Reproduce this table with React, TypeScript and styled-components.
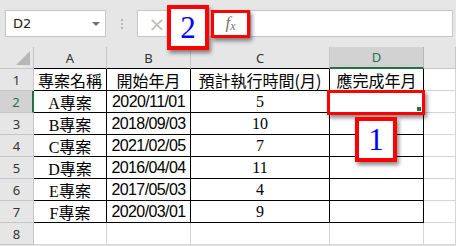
import styled, { createGlobalStyle } from 'styled-components';

const GlobalStyle = createGlobalStyle`
  html, body {
    margin: 0;
    padding: 0;
  }
  body {
    background: #e6e6e6;
    font-family: "Liberation Sans", Arial, sans-serif;
  }
`;

const columns = ['A', 'B', 'C', 'D'];

const headings = ['專案名稱', '開始年月', '預計執行時間(月)', '應完成年月'];

const projects = [
  { name: 'A專案', start: '2020/11/01', months: '5' },
  { name: 'B專案', start: '2018/09/03', months: '10' },
  { name: 'C專案', start: '2021/02/05', months: '7' },
  { name: 'D專案', start: '2016/04/04', months: '11' },
  { name: 'E專案', start: '2017/05/03', months: '4' },
  { name: 'F專案', start: '2020/03/01', months: '9' },
];

const GREEN = '#217346';
const GRID = '#d4d4d4';
const HEAD_LINE = '#c6c6c6';

function App() {
  return (
    <Sheet>
      <GlobalStyle />
      <FormulaBar>
        <NameBox>
          D2
          <Caret />
        </NameBox>
        <Grip>
          <i />
          <i />
          <i />
        </Grip>
        <ButtonStrip>
          <Cancel>×</Cancel>
          <Fx>
            f<sub>x</sub>
          </Fx>
        </ButtonStrip>
        <FormulaInput />
      </FormulaBar>

      <Grid>
        <Corner>
          <svg width="16" height="15" viewBox="0 0 16 15">
            <polygon points="15,0 15,14 1,14" fill="#b7b7b7" />
          </svg>
        </Corner>
        {columns.map((c) => (
          <ColHead key={c} $active={c === 'D'} $table>
            {c}
          </ColHead>
        ))}
        {/* column E label sits past the right edge */}
        <ColHead />

        <RowHead>1</RowHead>
        {headings.map((h) => (
          <Cell key={h} $boxed>
            {h}
          </Cell>
        ))}
        <Cell />

        {projects.map((p, i) => (
          <Row key={p.name}>
            <RowHead $active={i === 0}>{i + 2}</RowHead>
            <Cell $boxed $font="name">
              {p.name}
            </Cell>
            <Cell $boxed $font="date">
              {p.start}
            </Cell>
            <Cell $boxed $font="num">
              {p.months}
            </Cell>
            <Cell $boxed />
            <Cell />
          </Row>
        ))}

        <RowHead>8</RowHead>
        <Cell />
        <Cell />
        <Cell />
        <Cell />
        <Cell />
      </Grid>

      <Callout style={{ left: 167, top: 5 }}>2</Callout>
      <Frame style={{ left: 211, top: 10, width: 39, height: 28 }} />
      <Frame style={{ left: 327, top: 90, width: 98, height: 25 }}>
        <FillHandle />
      </Frame>
      <Callout style={{ left: 355, top: 117 }}>1</Callout>
    </Sheet>
  );
}

const Sheet = styled.div`
  position: relative;
  width: 456px;
  height: 246px;
  overflow: hidden;
  background: #e6e6e6;
`;

const FormulaBar = styled.div`
  display: flex;
  align-items: center;
  height: 47px;
  padding: 0 3px 0 5px;
  box-sizing: border-box;
`;

const NameBox = styled.div`
  position: relative;
  display: flex;
  align-items: center;
  width: 101px;
  height: 27px;
  box-sizing: border-box;
  padding-left: 7px;
  background: #fff;
  border: 1px solid ${HEAD_LINE};
  font-family: "DejaVu Sans", sans-serif;
  font-size: 13px;
  color: #222;
`;

const Caret = styled.span`
  position: absolute;
  right: 5px;
  top: 11px;
  border-left: 4px solid transparent;
  border-right: 4px solid transparent;
  border-top: 4px solid #6f6f6f;
`;

const Grip = styled.div`
  display: flex;
  flex-direction: column;
  gap: 2px;
  margin: 0 14px 0 15px;

  i {
    display: block;
    width: 2px;
    height: 2px;
    background: #b4b4b4;
  }
`;

const ButtonStrip = styled.div`
  display: flex;
  align-items: center;
  width: 113px;
  height: 27px;
  box-sizing: border-box;
  background: #fff;
  border: 1px solid ${HEAD_LINE};
  border-right: none;
`;

const Cancel = styled.span`
  width: 38px;
  text-align: center;
  font-family: "DejaVu Sans", sans-serif;
  font-size: 20px;
  line-height: 1;
  color: #bdbdbd;
`;

const Fx = styled.span`
  margin-left: auto;
  width: 39px;
  padding-bottom: 2px;
  text-align: center;
  font-family: "Liberation Serif", serif;
  font-style: italic;
  font-size: 17px;
  line-height: 1;
  color: #777;

  sub {
    font-size: 12px;
    vertical-align: -2px;
  }
`;

const FormulaInput = styled.div`
  flex: 1;
  height: 27px;
  box-sizing: border-box;
  background: #fff;
  border: 1px solid ${HEAD_LINE};
`;

const Grid = styled.div`
  display: grid;
  grid-template-columns: 34px 73px 84px 139px 94px 1fr;
  grid-auto-rows: 22px;
`;

const Row = styled.div`
  display: contents;
`;

const Corner = styled.div`
  display: flex;
  align-items: flex-end;
  justify-content: flex-end;
  padding: 0 2px 2px 0;
  box-sizing: border-box;
  border-right: 1px solid ${HEAD_LINE};
  border-bottom: 1px solid ${HEAD_LINE};
`;

const ColHead = styled.div<{ $active?: boolean; $table?: boolean }>`
  display: flex;
  align-items: center;
  justify-content: center;
  box-sizing: border-box;
  font-family: "Noto Sans", sans-serif;
  font-size: 13px;
  color: ${(p) => (p.$active ? GREEN : '#333')};
  background: ${(p) => (p.$active ? '#d2d2d2' : '#e6e6e6')};
  border-right: 1px solid ${(p) => (p.$active ? '#b8b8b8' : HEAD_LINE)};
  border-bottom: ${(p) =>
    p.$active ? `2px solid ${GREEN}` : `1px solid ${p.$table ? '#000' : HEAD_LINE}`};
`;

const RowHead = styled.div<{ $active?: boolean }>`
  display: flex;
  align-items: center;
  justify-content: center;
  box-sizing: border-box;
  font-family: "Noto Sans", sans-serif;
  font-size: 13px;
  color: ${(p) => (p.$active ? GREEN : '#333')};
  background: ${(p) => (p.$active ? '#d2d2d2' : '#e6e6e6')};
  border-right: ${(p) => (p.$active ? `2px solid ${GREEN}` : `1px solid ${HEAD_LINE}`)};
  border-bottom: 1px solid ${HEAD_LINE};
`;

const fonts = {
  name: '"Liberation Serif", "Noto Sans CJK TC", serif',
  date: '"Liberation Sans Narrow", "Liberation Sans", sans-serif',
  num: '"Liberation Serif", serif',
};

const Cell = styled.div<{ $boxed?: boolean; $font?: keyof typeof fonts }>`
  display: flex;
  align-items: center;
  justify-content: center;
  box-sizing: border-box;
  background: #fff;
  white-space: nowrap;
  color: #000;
  font-family: ${(p) => (p.$font ? fonts[p.$font] : '"Noto Sans CJK TC", sans-serif')};
  font-size: 16px;
  letter-spacing: ${(p) => (p.$font === 'date' ? '-0.6px' : '0')};
  border-right: 1px solid ${(p) => (p.$boxed ? '#000' : GRID)};
  border-bottom: 1px solid ${(p) => (p.$boxed ? '#000' : GRID)};
`;

const Callout = styled.div`
  position: absolute;
  width: 42px;
  height: 45px;
  box-sizing: border-box;
  display: flex;
  align-items: center;
  justify-content: center;
  background: #fff;
  border: 4px solid #ff0000;
  box-shadow: 2px 3px 4px rgba(0, 0, 0, 0.45);
  font-family: "Liberation Serif", serif;
  font-size: 31px;
  color: #0000ff;
`;

const Frame = styled.div`
  position: absolute;
  box-sizing: border-box;
  border: 3px solid #ff0000;
  box-shadow: 2px 3px 4px rgba(0, 0, 0, 0.45);
`;

const FillHandle = styled.span`
  position: absolute;
  right: 1px;
  bottom: 1px;
  width: 4px;
  height: 4px;
  background: ${GREEN};
`;

export default App;
